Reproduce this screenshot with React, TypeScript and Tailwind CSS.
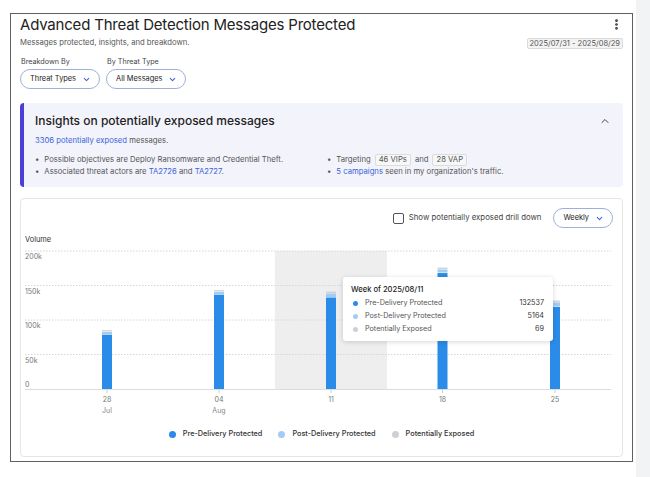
import React from 'react';
import { ChevronDown, ChevronUp, EllipsisVertical } from 'lucide-react';

const BLUE = '#2a8ce8';
const LIGHT = '#a3cbf4';
const GREY = '#cdd0d4';

const weeks = [
  { day: '28', month: 'Jul', pre: 78700, post: 2400, exposed: 60 },
  { day: '04', month: 'Aug', pre: 136700, post: 2800, exposed: 70 },
  { day: '11', month: '', pre: 132537, post: 5164, exposed: 69 },
  { day: '18', month: '', pre: 168000, post: 4600, exposed: 80 },
  { day: '25', month: '', pre: 119000, post: 5800, exposed: 75 },
];

function Pill({ label }: { label: string }) {
  return (
    <button className="flex h-[20px] items-center gap-[6px] rounded-full border border-[#9fb0d8] bg-white pl-[9px] pr-[8px] text-[7.4px] text-[#222]">
      {label}
      <ChevronDown size={9} strokeWidth={2.8} color="#3f62d6" />
    </button>
  );
}

function Chart() {
  const base = 161;
  const scale = 138 / 200000;
  const grid = [
    { y: 23, label: '200k' },
    { y: 57.5, label: '150k' },
    { y: 92, label: '100k' },
    { y: 126.5, label: '50k' },
  ];
  const xs = [86, 198, 310, 421.5, 534];

  return (
    <svg width="601" height="191" className="block">
      <text x="4" y="14" fontSize="7.4" fill="#333">Volume</text>
      <rect x="254" y="23" width="112" height="138" fill="#eeeeee" />
      {grid.map((g) => (
        <g key={g.label}>
          <line x1="4" x2="590" y1={g.y} y2={g.y} stroke="#d6d6d6" strokeWidth="1" strokeDasharray="1.5 1.5" />
          <text x="4" y={g.y + 8} fontSize="7" fill="#777">{g.label}</text>
        </g>
      ))}
      <text x="4" y="158.5" fontSize="7" fill="#777">0</text>
      <line x1="4" x2="590" y1={base + 0.5} y2={base + 0.5} stroke="#dcdcdc" />
      {weeks.map((w, i) => {
        const x = xs[i] - 5;
        const hPre = w.pre * scale;
        const hPost = Math.max(w.post * scale, 2.2);
        const preTop = base - hPre;
        const postTop = preTop - hPost - 0.5;
        const expTop = postTop - 1.8;
        return (
          <g key={w.day}>
            <rect x={x} y={expTop} width="10" height="1.3" fill={GREY} />
            <rect x={x} y={postTop} width="10" height={hPost} fill={LIGHT} />
            <rect x={x} y={preTop} width="10" height={hPre} fill={BLUE} />
            <line x1={xs[i]} x2={xs[i]} y1={base + 1} y2={base + 4} stroke="#ccc" />
            <text x={xs[i]} y="174" fontSize="7" fill="#777" textAnchor="middle">{w.day}</text>
            {w.month && (
              <text x={xs[i]} y="185" fontSize="7" fill="#888" textAnchor="middle">{w.month}</text>
            )}
          </g>
        );
      })}
    </svg>
  );
}

function Tooltip() {
  const rows = [
    { color: BLUE, label: 'Pre-Delivery Protected', value: '132537' },
    { color: LIGHT, label: 'Post-Delivery Protected', value: '5164' },
    { color: GREY, label: 'Potentially Exposed', value: '69' },
  ];
  return (
    <div className="absolute left-[322px] top-[78px] w-[210px] rounded-[3px] bg-white pl-[8px] pr-[9px] pt-[7px] pb-[6px] shadow-[0_1px_5px_rgba(0,0,0,0.16)]">
      <div className="text-[7.6px] font-medium leading-[12px] text-[#222]">Week of 2025/08/11</div>
      {rows.map((r) => (
        <div key={r.label} className="mt-[1px] flex h-[12px] items-center text-[7.2px] text-[#555]">
          <span className="ml-[2px] mr-[7px] h-[5px] w-[5px] rounded-full" style={{ background: r.color }} />
          <span className="flex-1">{r.label}</span>
          <span className="text-[#333]">{r.value}</span>
        </div>
      ))}
    </div>
  );
}

function Legend() {
  const items = [
    { color: BLUE, label: 'Pre-Delivery Protected' },
    { color: LIGHT, label: 'Post-Delivery Protected' },
    { color: GREY, label: 'Potentially Exposed' },
  ];
  return (
    <div className="mt-[10px] flex justify-center gap-[16px]">
      {items.map((i) => (
        <div key={i.label} className="flex items-center gap-[7px] text-[7.3px] font-medium text-[#333]">
          <span className="h-[7px] w-[7px] rounded-full" style={{ background: i.color }} />
          {i.label}
        </div>
      ))}
    </div>
  );
}

export default function App() {
  return (
    <div className="flex h-[477px] w-[650px] bg-white font-['Inter','Liberation_Sans',sans-serif] text-[#222]">
      <div className="w-[636px] pl-[10px] pt-[13px]">
        <div className="w-[623px] border border-[#5f5f5f] px-[9px] pb-[4px]">
          <div className="flex items-start justify-between">
            <h1 className="text-[15px] leading-[22px] tracking-[-0.2px] text-[#222]">Advanced Threat Detection Messages Protected</h1>
            <EllipsisVertical size={13} strokeWidth={3} className="mr-[0px] mt-[4px] text-[#333]" />
          </div>
          <div className="mt-[1px] flex h-[12px] items-center justify-between">
            <p className="text-[7.7px] text-[#555]">Messages protected, insights, and breakdown.</p>
            <span className="rounded-[2px] border border-[#dadada] bg-[#f3f3f3] px-[2px] text-[7.5px] leading-[9px] text-[#555]">
              2025/07/31 - 2025/08/29
            </span>
          </div>
          <div className="mt-[7px] flex gap-[6px]">
            <div className="flex flex-col gap-[2px]">
              <span className="pl-px text-[7.2px] leading-[11px] text-[#444]">Breakdown By</span>
              <Pill label="Threat Types" />
            </div>
            <div className="flex flex-col gap-[2px]">
              <span className="pl-px text-[7.2px] leading-[11px] text-[#444]">By Threat Type</span>
              <Pill label="All Messages" />
            </div>
          </div>

          <div className="mt-[14px] rounded-[4px] border-l-[4px] border-[#4b3fd8] bg-[#f3f3fb] pb-[9px] pl-[11px] pr-[12px] pt-[9px]">
            <div className="flex items-center justify-between">
              <h2 className="text-[12px] font-medium leading-[18px] text-[#222]">Insights on potentially exposed messages</h2>
              <ChevronUp size={12} strokeWidth={2} className="text-[#444]" />
            </div>
            <p className="mt-[5px] text-[7.7px] leading-[12px] text-[#555]">
              <span className="text-[#3b63d8]">3306 potentially exposed</span> messages.
            </p>
            <div className="mt-[7px] flex text-[7.7px] leading-[12px] text-[#555]">
              <ul className="w-[292px]">
                <li className="flex gap-[5px]"><span>•</span>Possible objectives are Deploy Ransomware and Credential Theft.</li>
                <li className="flex gap-[5px]">
                  <span>•</span>
                  <span>
                    Associated threat actors are <span className="text-[#3b63d8]">TA2726</span> and{' '}
                    <span className="text-[#3b63d8]">TA2727</span>.
                  </span>
                </li>
              </ul>
              <ul>
                <li className="flex items-center gap-[5px]">
                  <span>•</span>
                  <span className="flex items-center gap-[4px]">
                    Targeting
                    <span className="rounded-[2px] border border-[#dcdcdc] bg-[#f7f7f7] px-[3px] leading-[10px]">46 VIPs</span>
                    and
                    <span className="rounded-[2px] border border-[#dcdcdc] bg-[#f7f7f7] px-[3px] leading-[10px]">28 VAP</span>
                  </span>
                </li>
                <li className="flex gap-[5px]">
                  <span>•</span>
                  <span>
                    <span className="text-[#3b63d8]">5 campaigns</span> seen in my organization's traffic.
                  </span>
                </li>
              </ul>
            </div>
          </div>

          <div className="relative mt-[11px] h-[259px] rounded-[4px] border border-[#e6e6e6] pt-[9px]">
            <div className="flex items-center justify-end pr-[9px]">
              <label className="flex items-center gap-[5px] text-[7.8px] text-[#444]">
                <span className="h-[11px] w-[11px] rounded-[2px] border border-[#555] bg-white" />
                Show potentially exposed drill down
              </label>
              <div className="ml-[12px]">
                <Pill label="Weekly" />
              </div>
            </div>
            <Chart />
            <Legend />
            <Tooltip />
          </div>
        </div>
      </div>
      <div className="flex-1 bg-[#f2f3f5]" />
    </div>
  );
}
